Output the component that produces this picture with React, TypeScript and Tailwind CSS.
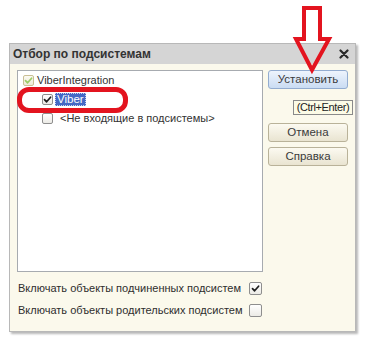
import React from "react";

function Check({ color = "#1e1e1e" }: { color?: string }) {
  return (
    <svg width="9" height="9" viewBox="0 0 9 9" className="block">
      <path d="M1.5 4.6 L3.6 6.8 L7.6 2.2" fill="none" stroke={color} strokeWidth="1.7" strokeLinecap="round" strokeLinejoin="round" />
    </svg>
  );
}

function Box({ checked, tone = "normal", size = 11 }: { checked?: boolean; tone?: "normal" | "muted"; size?: number }) {
  const cls =
    tone === "muted"
      ? "border-[#c9bf95] bg-gradient-to-b from-[#fbfaf2] to-[#efebd8]"
      : "border-[#8e8e8e] bg-gradient-to-b from-[#ffffff] to-[#ecebe6]";
  return (
    <div
      className={`shrink-0 flex items-center justify-center rounded-[2px] border ${cls}`}
      style={{ width: size, height: size }}
    >
      {checked && <Check color={tone === "muted" ? "#9ccc68" : "#1e1e1e"} />}
    </div>
  );
}

export default function App() {
  return (
    <div className="relative w-[367px] h-[347px] bg-white overflow-hidden font-['Liberation_Sans',Arial,sans-serif] text-[11px] text-[#2e2e2e] leading-none whitespace-nowrap">
      <div className="pt-[43px] pl-[9px]">
        <div className="w-[347px] h-[289px] flex flex-col border border-[#b8b8b8] bg-[#fbf9ec] shadow-[2px_2px_2px_rgba(0,0,0,0.28)]">
          {/* title bar */}
          <div className="h-[20px] bg-[#d5d5d5] flex items-center justify-between pl-[3px] pr-[6px]">
            <span className="font-bold text-[12px] text-[#333]">Отбор по подсистемам</span>
            <svg width="10" height="10" viewBox="0 0 10 10" className="block">
              <path d="M1.5 1.5 L8.5 8.5 M8.5 1.5 L1.5 8.5" stroke="#2a2a2a" strokeWidth="2.2" strokeLinecap="round" />
            </svg>
          </div>
          {/* body */}
          <div className="flex pl-[7px] pt-[6px]">
            <div className="w-[246px] flex flex-col">
              <div className="h-[202px] bg-white border border-[#a7abb0] flex flex-col">
                <div className="h-[19px] flex items-center pl-[5px]">
                  <Box checked tone="muted" />
                  <span className="ml-[3px] text-[#333]">ViberIntegration</span>
                </div>
                <div className="h-[19px] flex items-center pl-[24px]">
                  <Box checked />
                  <span className="ml-[2px] h-[13px] px-[2px] flex items-center bg-[#4468c4] text-white text-[11.5px] outline outline-1 outline-dotted outline-[#c8d4f0] -outline-offset-1">
                    Viber
                  </span>
                </div>
                <div className="h-[19px] flex items-center pl-[24px]">
                  <Box />
                  <span className="ml-[7px] text-[#333]">&lt;Не входящие в подсистемы&gt;</span>
                </div>
              </div>
              <div className="mt-[5px] h-[22px] flex items-center justify-between pl-[1px] pr-[1px]">
                <span>Включать объекты подчиненных подсистем</span>
                <Box checked size={13} />
              </div>
              <div className="h-[22px] flex items-center justify-between pl-[1px] pr-[1px]">
                <span>Включать объекты родительских подсистем</span>
                <Box size={13} />
              </div>
            </div>
            <div className="ml-[5px] w-[80px] flex flex-col text-[11.5px]">
              <div className="h-[19px] rounded-[3px] border border-[#93acd0] bg-gradient-to-b from-[#eef4fc] to-[#cadcf3] flex items-center justify-center text-[#3a3a3a]">
                Установить
              </div>
              <div className="mt-[11px] self-end mr-[-5px] w-[60px] h-[15px] border border-[#8a8a8a] bg-[#fcfbe6] flex items-center justify-center text-[11px] tracking-[-0.4px] text-[#222]">
                (Ctrl+Enter)
              </div>
              <div className="mt-[8px] h-[19px] rounded-[3px] border border-[#b9b299] bg-gradient-to-b from-[#fcfaf1] to-[#e9e4d1] flex items-center justify-center text-[#3a3a3a]">
                Отмена
              </div>
              <div className="mt-[5px] h-[19px] rounded-[3px] border border-[#b9b299] bg-gradient-to-b from-[#fcfaf1] to-[#e9e4d1] flex items-center justify-center text-[#3a3a3a]">
                Справка
              </div>
            </div>
          </div>
        </div>
      </div>

      {/* annotation: red rounded rectangle */}
      <div className="absolute left-[17px] top-[87px] w-[111px] h-[26px] rounded-[12px] border-[5px] border-[#e3141f]" />

      {/* annotation: red hollow arrow */}
      <svg className="absolute left-0 top-0" width="367" height="347" viewBox="0 0 367 347">
        <polygon
          points="304,8 320,8 320,39 329,39 312,70 296,39 304,39"
          fill="none"
          stroke="#e3141f"
          strokeWidth="4"
          strokeLinejoin="miter"
        />
      </svg>
    </div>
  );
}
